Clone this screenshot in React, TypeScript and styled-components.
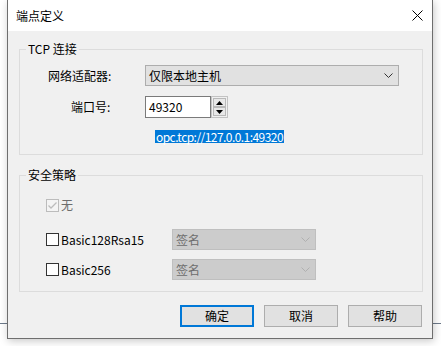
import React from 'react';
import styled, { createGlobalStyle } from 'styled-components';

const GlobalStyle = createGlobalStyle`
  body {
    margin: 0;
    background: #fff;
    font-family: 'Noto Sans CJK SC', 'Noto Sans', sans-serif;
    font-size: 12px;
    color: #000;
  }
`;

const Stage = styled.div`
  width: 441px;
  height: 346px;
  overflow: hidden;
  padding-left: 7px;
  box-sizing: border-box;
  background: linear-gradient(#6d7a8a, #6d7a8a) 0 323px / 100% 1px no-repeat,
    #fff;
`;

const Window = styled.div`
  width: 426px;
  height: 339px;
  box-sizing: border-box;
  border: 1px solid #6e6e6e;
  border-top: none;
  display: flex;
  flex-direction: column;
  box-shadow: 1px 2px 8px rgba(0, 0, 0, 0.22);
`;

const TitleBar = styled.div`
  height: 31px;
  flex: none;
  background: #fff;
  display: flex;
  align-items: center;
  justify-content: space-between;
  padding: 0 9px 0 8px;
`;

const Title = styled.span`
  font-size: 12px;
  line-height: 16px;
`;

const Body = styled.div`
  flex: 1;
  background: #f0f0f0;
  padding: 10px 9px 11px 11px;
  display: flex;
  flex-direction: column;
`;

const Group = styled.fieldset<{ $top: number; $gap?: number }>`
  margin: ${(p) => p.$gap ?? 0}px 0 0 0;
  border: 1px solid #dcdcdc;
  padding: ${(p) => p.$top}px 0 11px 0;
  min-width: 0;
  display: flex;
  flex-direction: column;
`;

const Legend = styled.legend`
  margin-left: 6px;
  padding: 0 2px;
  font-size: 12px;
  line-height: 16px;
`;

const Row = styled.div<{ $mt?: number; $indent?: number }>`
  display: flex;
  align-items: center;
  margin-top: ${(p) => p.$mt ?? 0}px;
  padding-left: ${(p) => p.$indent ?? 0}px;
`;

const Label = styled.span<{ $indent: number }>`
  width: 125px;
  box-sizing: border-box;
  padding-left: ${(p) => p.$indent}px;
  line-height: 16px;
`;

const Combo = styled.div<{ $w: number; $disabled?: boolean }>`
  width: ${(p) => p.$w}px;
  height: 21px;
  box-sizing: border-box;
  border: 1px solid ${(p) => (p.$disabled ? '#bfbfbf' : '#adadad')};
  background: ${(p) => (p.$disabled ? '#cccccc' : '#e1e1e1')};
  color: ${(p) => (p.$disabled ? '#6d6d6d' : '#000')};
  display: flex;
  align-items: center;
  justify-content: space-between;
  padding: 0 5px 0 3px;
  line-height: 16px;
`;

const NumberBox = styled.div`
  display: flex;
  height: 22px;
`;

const NumberInput = styled.div`
  width: 66px;
  box-sizing: border-box;
  border: 1px solid #7a7a7a;
  background: #fff;
  padding-left: 3px;
  display: flex;
  align-items: center;
  line-height: 16px;
`;

const Spinner = styled.div`
  width: 17px;
  box-sizing: border-box;
  border: 1px solid #c3c3c3;
  background: #f0f0f0;
  padding: 1px;
  display: flex;
  flex-direction: column;
`;

const SpinButton = styled.div`
  flex: 1;
  border: 1px solid #b9b9b9;
  background: #e8e8e8;
  display: flex;
  align-items: center;
  justify-content: center;
`;

const Url = styled.div`
  margin: 12px 0 0 135px;
  height: 13px;
  display: flex;
`;

const Selected = styled.span`
  background: #0078d7;
  color: #fff;
  line-height: 13px;
  height: 13px;
  padding: 0 1px;
  letter-spacing: -0.55px;
`;

const CheckCell = styled.div`
  width: 126px;
  display: flex;
  align-items: center;
`;

const Box = styled.span<{ $disabled?: boolean }>`
  width: 13px;
  height: 13px;
  box-sizing: border-box;
  border: 1px solid ${(p) => (p.$disabled ? '#bcbcbc' : '#333333')};
  background: ${(p) => (p.$disabled ? '#f4f4f4' : '#fff')};
  display: flex;
  align-items: center;
  justify-content: center;
  flex: none;
`;

const CheckText = styled.span<{ $disabled?: boolean }>`
  margin-left: 2px;
  line-height: 16px;
  color: ${(p) => (p.$disabled ? '#6d6d6d' : '#000')};
`;

const Buttons = styled.div`
  display: flex;
  justify-content: flex-end;
  gap: 10px;
  margin: 13px 1px 0 0;
`;

const Button = styled.div<{ $default?: boolean }>`
  width: 74px;
  height: 22px;
  box-sizing: border-box;
  border: ${(p) => (p.$default ? '2px solid #0078d7' : '1px solid #adadad')};
  background: #e1e1e1;
  display: flex;
  align-items: center;
  justify-content: center;
  line-height: 16px;
`;

function Chevron({ color }: { color: string }) {
  return (
    <svg width='9' height='5' viewBox='0 0 9 5'>
      <path d='M0.5 0.5 L4.5 4.5 L8.5 0.5' fill='none' stroke={color} strokeWidth='1' />
    </svg>
  );
}

function Check({ disabled, checked }: { disabled?: boolean; checked?: boolean }) {
  return (
    <Box $disabled={disabled}>
      {checked && (
        <svg width='11' height='11' viewBox='0 0 11 11'>
          <path d='M1.5 5.5 L4 8 L9.5 2.5' fill='none' stroke='#bcbcbc' strokeWidth='1.3' />
        </svg>
      )}
    </Box>
  );
}

const policies = ['Basic128Rsa15', 'Basic256'];

export default function App() {
  return (
    <Stage>
      <GlobalStyle />
      <Window>
        <TitleBar>
          <Title>端点定义</Title>
          <svg width='11' height='11' viewBox='0 0 11 11'>
            <path d='M0.5 0.5 L10.5 10.5 M10.5 0.5 L0.5 10.5' stroke='#000' strokeWidth='1' />
          </svg>
        </TitleBar>
        <Body>
          <Group $top={8}>
            <Legend>TCP 连接</Legend>
            <Row>
              <Label $indent={28}>网络适配器:</Label>
              <Combo $w={254}>
                <span>仅限本地主机</span>
                <Chevron color='#333' />
              </Combo>
            </Row>
            <Row $mt={10}>
              <Label $indent={51}>端口号:</Label>
              <NumberBox>
                <NumberInput>49320</NumberInput>
                <Spinner>
                  <SpinButton>
                    <svg width='7' height='4' viewBox='0 0 7 4'>
                      <path d='M0 4 L3.5 0 L7 4 Z' fill='#000' />
                    </svg>
                  </SpinButton>
                  <SpinButton>
                    <svg width='7' height='4' viewBox='0 0 7 4'>
                      <path d='M0 0 L3.5 4 L7 0 Z' fill='#000' />
                    </svg>
                  </SpinButton>
                </Spinner>
              </NumberBox>
            </Row>
            <Url>
              <Selected>opc.tcp://127.0.0.1:49320</Selected>
            </Url>
          </Group>
          <Group $top={14} $gap={12}>
            <Legend>安全策略</Legend>
            <Row $indent={26}>
              <Check disabled checked />
              <CheckText $disabled>无</CheckText>
            </Row>
            {policies.map((name, i) => (
              <Row key={name} $indent={26} $mt={i === 0 ? 16 : 9}>
                <CheckCell>
                  <Check />
                  <CheckText>{name}</CheckText>
                </CheckCell>
                <Combo $w={144} $disabled>
                  <span>签名</span>
                  <Chevron color='#b0b0b0' />
                </Combo>
              </Row>
            ))}
          </Group>
          <Buttons>
            <Button $default>确定</Button>
            <Button>取消</Button>
            <Button>帮助</Button>
          </Buttons>
        </Body>
      </Window>
    </Stage>
  );
}
